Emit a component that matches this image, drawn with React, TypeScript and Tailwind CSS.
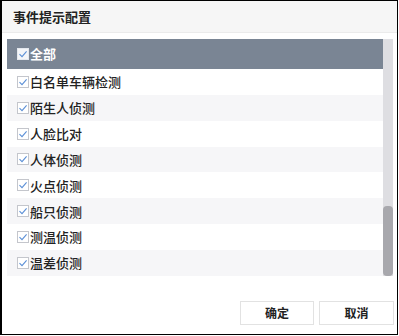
import React from "react";

const items = ["白名单车辆检测", "陌生人侦测", "人脸比对", "人体侦测", "火点侦测", "船只侦测", "测温侦测", "温差侦测"];

const font = { fontFamily: '"Noto Sans CJK SC", "Noto Sans", sans-serif' };

function Check({ head }: { head?: boolean }) {
  return (
    <span
      className={`flex h-[12px] w-[12px] shrink-0 items-center justify-center border ${
        head ? "border-[#e4e8ee] bg-[#f4f6f9]" : "border-[#c4c6cc] bg-white"
      }`}
    >
      <svg width="10" height="10" viewBox="0 0 10 10">
        <path d="M1.5 5.2 L4 7.6 L8.6 2.4" fill="none" stroke="#5b8fd6" strokeWidth="1.1" />
      </svg>
    </span>
  );
}

export default function App() {
  return (
    <div
      className="flex h-[335px] w-[398px] flex-col border border-l-2 border-black bg-white text-[#222]"
      style={font}
    >
      <div className="flex h-[32px] items-center border-b border-[#ebebeb] bg-[#f6f6f6] px-[11px] text-[13px] font-bold">
        事件提示配置
      </div>
      <div className="ml-[5px] mr-[4px] mt-[6px] flex h-[237px]">
        <div className="flex flex-1 flex-col">
          <div className="flex h-[30px] items-center gap-[1px] bg-[#7a8594] pl-[10px] text-[13px] font-bold text-white">
            <Check head />
            全部
          </div>
          {items.map((t, i) => (
            <div
              key={t}
              className={`flex h-[26px] items-center gap-[1px] pl-[10px] text-[13px] font-medium ${
                i % 2 ? "bg-[#f6f6f8]" : "bg-white"
              }`}
            >
              <Check />
              {t}
            </div>
          ))}
        </div>
        <div className="flex w-[10px] flex-col justify-end bg-[#dedee2]">
          <div className="h-[70px] rounded-[4px] bg-[#a8a8ad]" />
        </div>
      </div>
      <div className="mt-[25px] flex justify-end gap-[5px] pr-[3px]">
        <button className="h-[24px] w-[74px] border border-[#e2e2e2] bg-white text-[12px] font-bold">确定</button>
        <button className="h-[24px] w-[75px] border border-[#e2e2e2] bg-white text-[12px] font-bold">取消</button>
      </div>
    </div>
  );
}
